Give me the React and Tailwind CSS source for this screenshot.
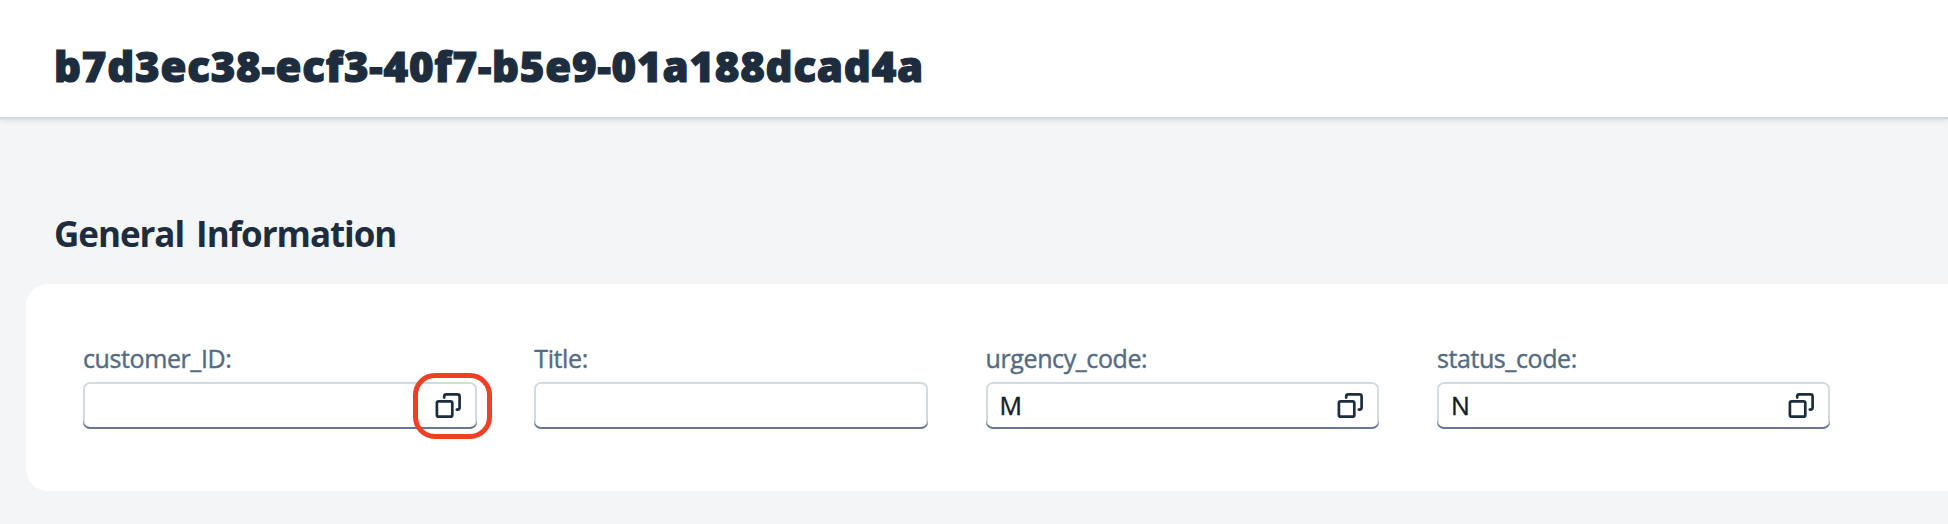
const fields = [
  { label: 'customer_ID:', value: '', help: true, marked: true },
  { label: 'Title:', value: '', help: false },
  { label: 'urgency_code:', value: 'M', help: true },
  { label: 'status_code:', value: 'N', help: true },
];

function ValueHelpIcon() {
  return (
    <svg width="28" height="28" viewBox="0 0 28 28" fill="none" stroke="#1d2d3e" strokeWidth="2.7" strokeLinecap="round" strokeLinejoin="round">
      <rect x="1.9" y="10.3" width="15.4" height="15.4" rx="1.8" />
      <path d="M9.2 6.6V5.4Q9.2 3.3 11.3 3.3H22.5Q24.6 3.3 24.6 5.4V16.5Q24.6 18.6 22.5 18.6H21.8" />
    </svg>
  );
}

function Field({ label, value, help, marked }) {
  return (
    <div className="w-[393.5px] shrink-0">
      <div className="h-[38px] text-[25px] leading-[29px] tracking-[-0.4px] whitespace-nowrap text-[#556b82] [-webkit-text-stroke:0.4px_#556b82]">{label}</div>
      <div className="relative flex h-[47px] items-center justify-between rounded-[7px] border-2 border-[#d5dadf] pr-[12px] pl-[12px]">
        <div className="absolute -inset-0.5 rounded-[7px] shadow-[inset_0_-2px_0_#64788f]" />
        <span className="text-[25px] leading-none text-[#131e29] [-webkit-text-stroke:0.4px_#131e29]">{value}</span>
        {help && <div className="pb-[2px]"><ValueHelpIcon /></div>}
        {marked && <div className="absolute top-[-11px] right-[-17px] h-[66px] w-[79px] rounded-[22px] border-5 border-[#ee4026]" />}
      </div>
    </div>
  );
}

export default function App() {
  return (
    <div className="flex h-[524px] w-full flex-col overflow-hidden bg-[#f4f5f7] font-['Open_Sans',sans-serif]">
      <header className="relative h-[117px] shrink-0 bg-white pt-[36px] pl-[54px] shadow-[0_1px_1px_1px_#d5d8da,0_2px_7px_#00000026]">
        <h1 className="text-[42px] leading-[60px] font-extrabold tracking-[0.8px] whitespace-nowrap text-[#1d2d3e] [-webkit-text-stroke:1.2px_#1d2d3e]">b7d3ec38-ecf3-40f7-b5e9-01a188dcad4a</h1>
      </header>
      <main className="pt-[92px]">
        <h2 className="h-[75px] pl-[54px] text-[35px] leading-[50px] font-bold tracking-[-1.05px] [word-spacing:4px] whitespace-nowrap text-[#1d2d3e]">General Information</h2>
        <section className="ml-[26px] flex h-[207px] gap-[57.8px] rounded-l-[22px] bg-white pt-[60px] pl-[57px]">
          {fields.map((f) => <Field key={f.label} {...f} />)}
        </section>
      </main>
    </div>
  );
}
